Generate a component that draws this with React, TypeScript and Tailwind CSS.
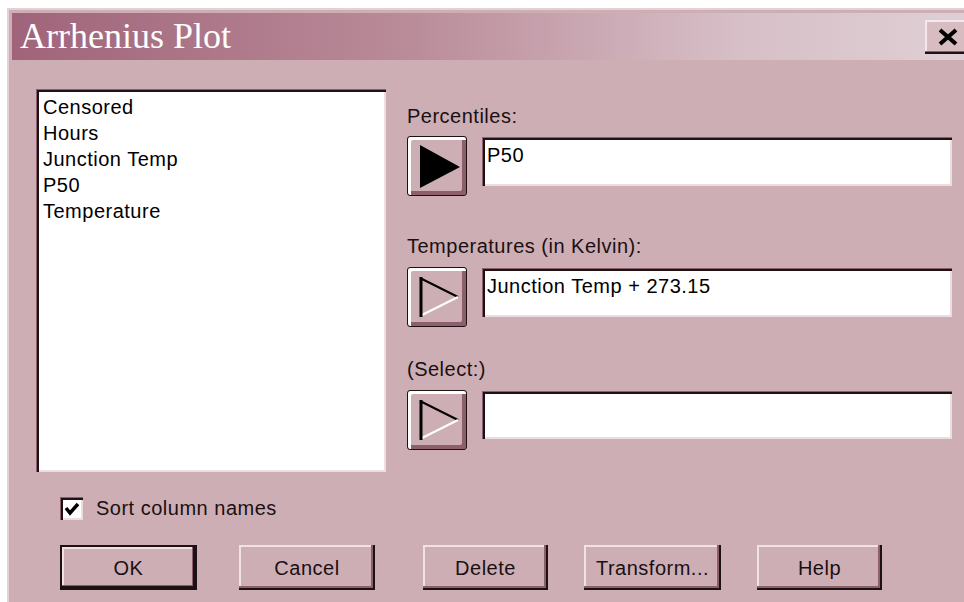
import type { ReactNode } from 'react';

const columns = ['Censored', 'Hours', 'Junction Temp', 'P50', 'Temperature'];

const raised =
  'shadow-[inset_-2px_-2px_0_#1c1114,inset_-4px_-4px_0_#8d5e6b,inset_2px_2px_0_#efe2e5]';
const sunken =
  'shadow-[inset_1px_1px_0_#8d5e6b,inset_3px_3px_0_#1c1114,inset_-2px_-2px_0_#ecdde1]';

const ArrowButton = ({ filled }: { filled?: boolean }) => (
  <button className="w-[60px] h-[60px] shrink-0 rounded-[3px] border border-[#1c1114] bg-[#cdaeb4] shadow-[inset_3px_3px_0_#ffffff,inset_-4px_-4px_0_#8d5e6b] flex items-center justify-center p-0">
    <svg width="58" height="58" viewBox="0 0 58 58">
      {filled ? (
        <polygon points="12,8 52,30 12,51" fill="#000" />
      ) : (
        <>
          <line x1="12" y1="10" x2="50" y2="29" stroke="#000" strokeWidth="2" />
          <line x1="12" y1="48" x2="50" y2="29" stroke="#fff" strokeWidth="2" />
          <line x1="13" y1="9" x2="13" y2="49" stroke="#000" strokeWidth="3" />
        </>
      )}
    </svg>
  </button>
);

const Field = ({ value, height }: { value?: string; height: string }) => (
  <div
    className={`mt-[1px] ml-[15px] w-[470px] ${height} bg-white ${sunken} pl-[5px] pt-[6px] text-[20px] leading-[24px] tracking-[0.5px] text-black`}
  >
    {value}
  </div>
);

const Label = ({ children, top }: { children: ReactNode; top: string }) => (
  <div className={`${top} text-[20px] leading-[24px] tracking-[0.5px] text-[#1a1012]`}>{children}</div>
);

const DialogButton = ({
  label,
  width,
  left,
  isDefault,
}: {
  label: string;
  width: string;
  left: string;
  isDefault?: boolean;
}) => (
  <button
    className={`${width} ${left} h-[45px] shrink-0 bg-[#cdaeb4] text-[20px] leading-[24px] tracking-[0.5px] text-[#1a1012] ${
      isDefault
        ? 'border-2 border-[#1c1114] shadow-[inset_-2px_-2px_0_#1c1114,inset_-3px_-3px_0_#8d5e6b,inset_2px_2px_0_#efe2e5]'
        : raised
    }`}
  >
    {label}
  </button>
);

export default function App() {
  return (
    <div className="w-[964px] h-[602px] overflow-hidden bg-white pl-[7px] pt-[8px] font-['Liberation_Sans',Arial,sans-serif]">
      <div className="w-[1000px] h-[620px] bg-[#cdaeb4] border-l-2 border-t-2 border-[#e4d0d5] pl-[3px] pt-[3px]">
        {/* title bar */}
        <div className="w-[966px] h-[47px] flex items-start bg-[linear-gradient(to_right,#a0647a,#b98a98_40%,#d7bfc7_75%,#e0d0d6)]">
          <div className="flex-1 pl-[8px] font-['Liberation_Serif',serif] text-[36px] leading-[47px] text-white">
            Arrhenius Plot
          </div>
          <button className="mt-[7px] mr-[7px] w-[46px] h-[34px] bg-[#d7bcc2] shadow-[inset_-2px_-2px_0_#1c1114,inset_-3px_-3px_0_#8d5e6b,inset_2px_2px_0_#f3e8ea] flex items-center justify-center">
            <svg width="22" height="18" viewBox="0 0 22 18">
              <path d="M3 2 L19 16 M19 2 L3 16" stroke="#000" strokeWidth="4" />
            </svg>
          </button>
        </div>

        <div className="pl-[24px] pt-[29px]">
          <div className="flex">
            {/* column list */}
            <div className={`w-[350px] h-[383px] shrink-0 bg-white ${sunken} pl-[7px] pt-[5px]`}>
              {columns.map((c) => (
                <div key={c} className="text-[20px] leading-[26px] tracking-[0.5px] text-black">
                  {c}
                </div>
              ))}
            </div>

            <div className="ml-[21px] flex flex-col">
              <Label top="mt-[15px]">Percentiles:</Label>
              <div className="mt-[8px] flex items-start">
                <ArrowButton filled />
                <Field value="P50" height="h-[49px]" />
              </div>

              <Label top="mt-[38px]">Temperatures (in Kelvin):</Label>
              <div className="mt-[9px] flex items-start">
                <ArrowButton />
                <Field value="Junction Temp + 273.15" height="h-[49px]" />
              </div>

              <Label top="mt-[30px]">(Select:)</Label>
              <div className="mt-[9px] flex items-start">
                <ArrowButton />
                <Field height="h-[48px]" />
              </div>
            </div>
          </div>

          <div className="mt-[25px] ml-[24px] h-[23px] flex items-center">
            <div className={`w-[23px] h-[23px] bg-white ${sunken} flex items-center justify-center`}>
              <svg width="16" height="14" viewBox="0 0 16 14">
                <path d="M2 6 L6 11 L14 2" stroke="#000" strokeWidth="3.5" fill="none" />
              </svg>
            </div>
            <span className="ml-[13px] text-[20px] leading-[23px] tracking-[0.5px] text-[#1a1012]">
              Sort column names
            </span>
          </div>

          <div className="mt-[25px] flex">
            <DialogButton label="OK" width="w-[137px]" left="ml-[24px]" isDefault />
            <DialogButton label="Cancel" width="w-[136px]" left="ml-[42px]" />
            <DialogButton label="Delete" width="w-[125px]" left="ml-[48px]" />
            <DialogButton label="Transform..." width="w-[137px]" left="ml-[36px]" />
            <DialogButton label="Help" width="w-[125px]" left="ml-[36px]" />
          </div>
        </div>
      </div>
    </div>
  );
}
